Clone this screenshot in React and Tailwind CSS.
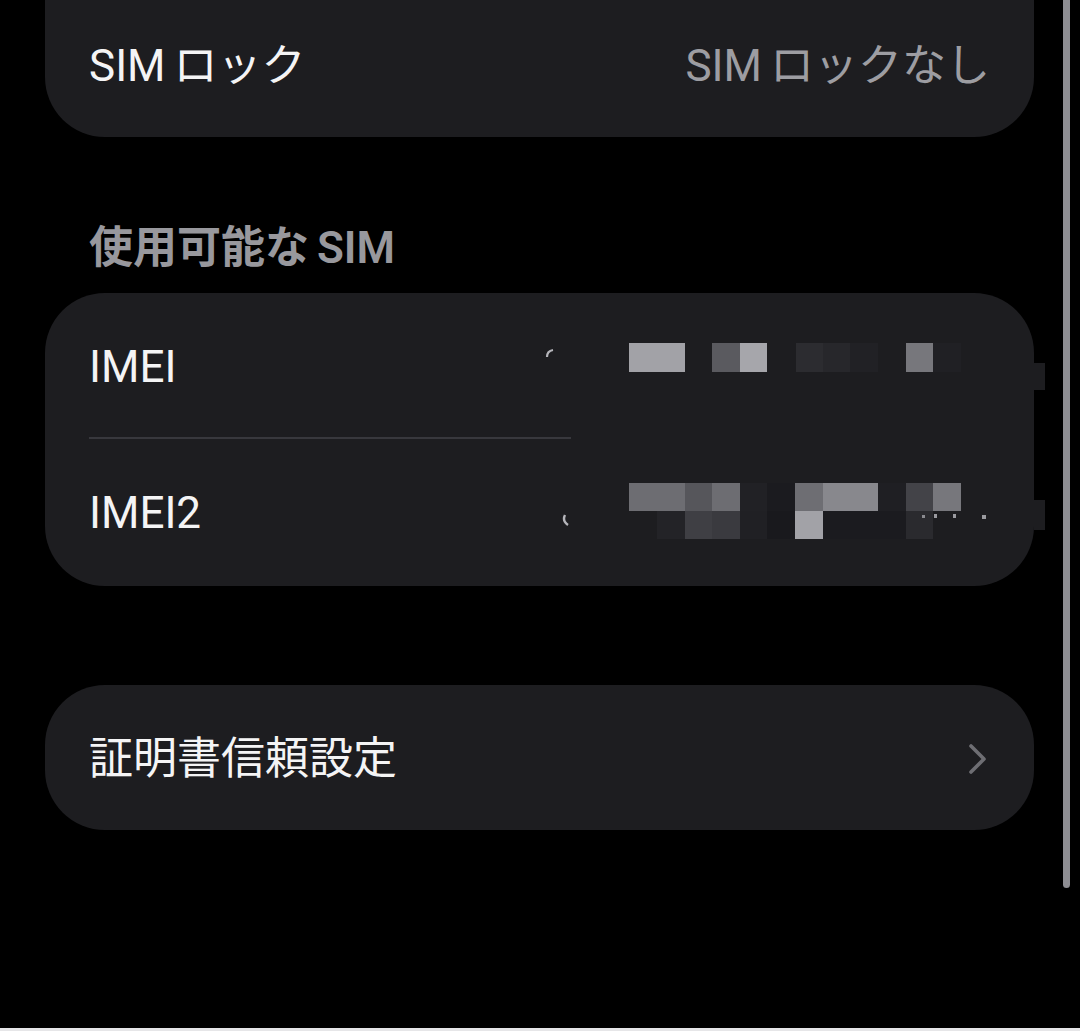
const font = {
  fontFamily: '"Roboto", "Noto Sans CJK JP", sans-serif',
};

// pixelated blur over the IMEI numbers: [left, top, width, height, colour]
const mosaic = [
  [584, 50, 56, 29, "#a2a2a7"],
  [667, 50, 28, 29, "#5a5a5f"],
  [695, 50, 27, 29, "#a6a6ab"],
  [751, 50, 27, 29, "#2c2c30"],
  [778, 50, 27, 29, "#27272b"],
  [805, 50, 28, 29, "#212125"],
  [861, 50, 27, 29, "#77777c"],
  [888, 50, 28, 29, "#202024"],

  [584, 190, 56, 28, "#6d6d72"],
  [640, 190, 27, 28, "#56565b"],
  [667, 190, 28, 28, "#6d6d72"],
  [695, 190, 27, 28, "#212125"],
  [722, 190, 28, 28, "#1b1b1f"],
  [750, 190, 28, 28, "#6e6e73"],
  [778, 190, 55, 28, "#88888d"],
  [833, 190, 28, 28, "#1f1f23"],
  [861, 190, 27, 28, "#434348"],
  [888, 190, 28, 28, "#77777c"],

  [612, 218, 28, 28, "#232327"],
  [640, 218, 27, 28, "#3f3f44"],
  [667, 218, 28, 28, "#3a3a3f"],
  [695, 218, 27, 28, "#202024"],
  [722, 218, 28, 28, "#19191d"],
  [750, 218, 28, 28, "#a2a2a7"],
  [778, 218, 83, 28, "#1b1b1f"],
  [861, 218, 27, 28, "#2a2a2e"],

  [877, 222, 3, 3, "#8a8a8f"],
  [889, 221, 3, 4, "#9a9a9f"],
  [908, 221, 3, 4, "#9a9a9f"],
  [937, 222, 4, 4, "#9a9a9f"],

  [989, 70, 11, 27, "#1d1d20"],
  [989, 207, 11, 30, "#1d1d20"],
];

function Row({ label, children, className = "" }) {
  return (
    <div className={"flex items-center justify-between px-[44px] " + className}>
      <span className="text-[44px] leading-none text-[#f4f4f5]">{label}</span>
      {children}
    </div>
  );
}

export default function App() {
  return (
    <div
      className="relative flex h-[1031px] w-[1080px] flex-col overflow-hidden bg-black"
      style={font}
    >
      <div className="flex-1 pl-[45px]">
        {/* SIM lock card (top cut off) */}
        <div className="w-[989px] rounded-b-[60px] bg-[#1d1d20]">
          <Row
            label={
              <>
                SIM<span className="ml-[8px]">ロック</span>
              </>
            }
            className="h-[137px] pb-[6px]"
          >
            <span className="text-[44px] leading-none text-[#9d9da2]">
              SIM<span className="ml-[8px]">ロックなし</span>
            </span>
          </Row>
        </div>

        <div className="mt-[81px] flex h-[60px] items-center pl-[44px]">
          <span className="text-[44px] font-semibold leading-none text-[#98989d]">
            使用可能な<span className="ml-[8px]">SIM</span>
          </span>
        </div>

        {/* IMEI card */}
        <div className="relative mt-[15px] w-[989px] rounded-[60px] bg-[#1d1d20]">
          <Row label="IMEI" className="h-[144px] pt-[4px]" />
          <div className="ml-[44px] h-[2px] w-[482px] bg-[#38383d]" />
          <Row label="IMEI2" className="h-[147px]" />

          {mosaic.map(([l, t, w, h, c], i) => (
            <div
              key={i}
              className="absolute"
              style={{ left: l, top: t, width: w, height: h, background: c }}
            />
          ))}
          <svg className="absolute left-[500px] top-[55px]" width="10" height="10" viewBox="0 0 10 10">
            <path d="M2 9 Q2 3 8 2" stroke="#b5b5ba" strokeWidth="2.2" fill="none" />
          </svg>
          <svg className="absolute left-[516px] top-[220px]" width="10" height="14" viewBox="0 0 10 14">
            <path d="M4 2 Q1 8 7 12" stroke="#b5b5ba" strokeWidth="2.4" fill="none" />
          </svg>
        </div>

        {/* certificate trust card */}
        <div className="mt-[99px] w-[989px] rounded-[60px] bg-[#1d1d20]">
          <Row label="証明書信頼設定" className="h-[145px] pt-[3px]">
            <svg width="22" height="34" viewBox="0 0 22 34" className="mr-[1px]">
              <path
                d="M4 4 L17 17 L4 30"
                stroke="#6e6e73"
                strokeWidth="3.6"
                strokeLinecap="round"
                strokeLinejoin="round"
                fill="none"
              />
            </svg>
          </Row>
        </div>
      </div>

      {/* scroll indicator */}
      <div className="absolute left-[1063px] top-0 h-[888px] w-[7px] rounded-b-full bg-[#8e8e93]" />

      <div className="h-[3px] w-full bg-[#e6e6e8]" />
    </div>
  );
}
